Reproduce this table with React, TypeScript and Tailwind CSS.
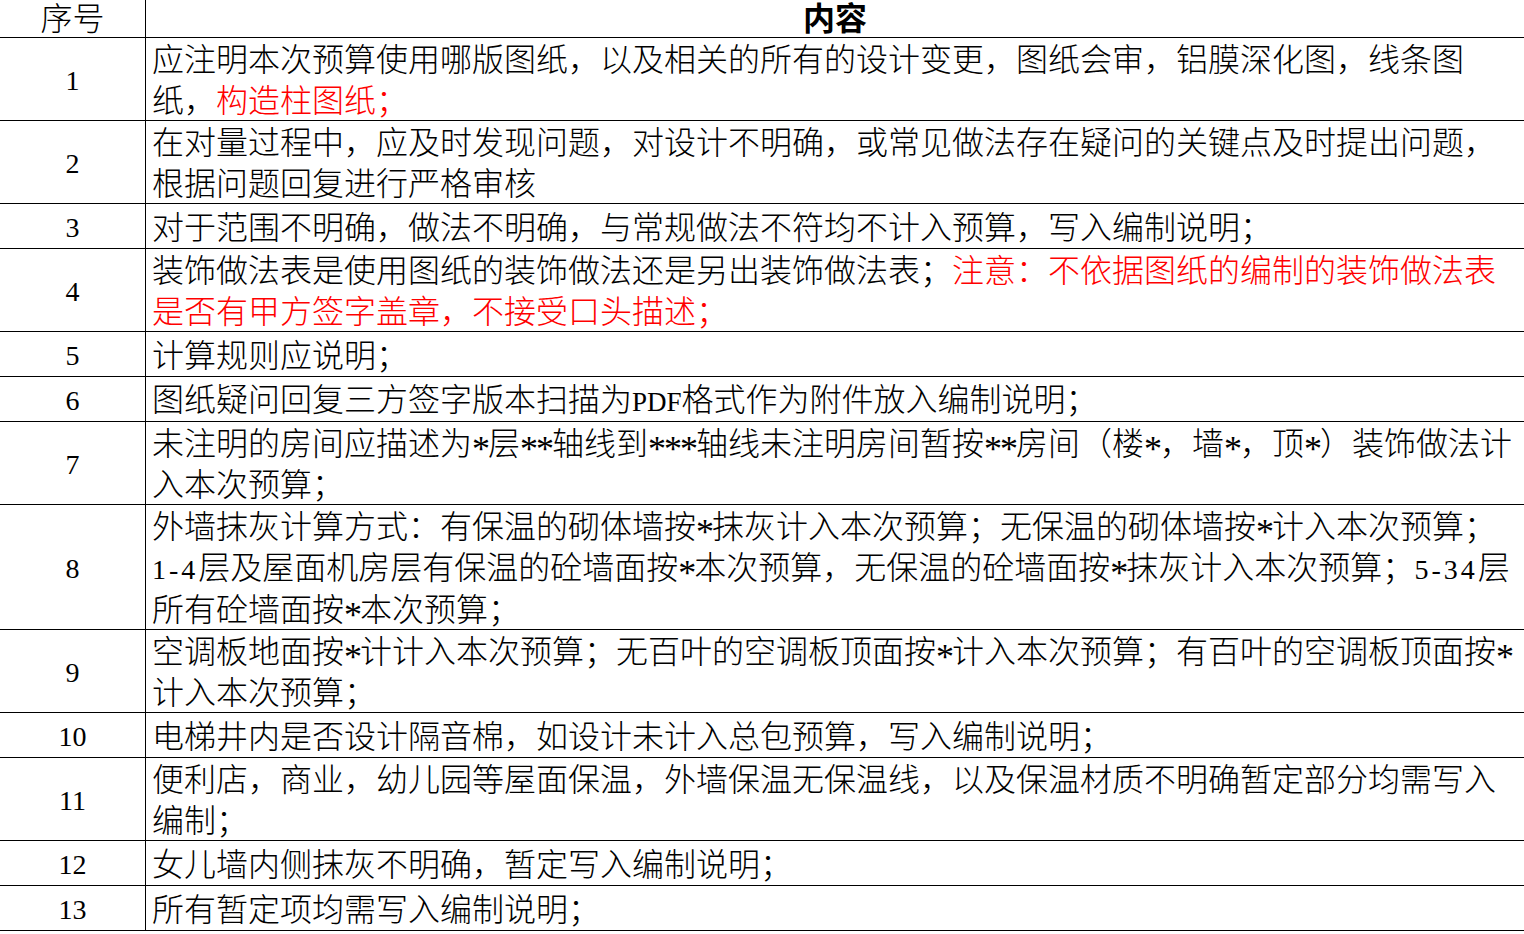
import React from 'react';

type Seg = { t: string; red?: boolean };
type Row = { no: string; h: string; lines: Seg[][] };

const rows: Row[] = [
  {
    no: '1',
    h: 'h-[83px]',
    lines: [
      [{ t: '应注明本次预算使用哪版图纸，以及相关的所有的设计变更，图纸会审，铝膜深化图，线条图' }],
      [{ t: '纸，' }, { t: '构造柱图纸；', red: true }],
    ],
  },
  {
    no: '2',
    h: 'h-[83px]',
    lines: [
      [{ t: '在对量过程中，应及时发现问题，对设计不明确，或常见做法存在疑问的关键点及时提出问题，' }],
      [{ t: '根据问题回复进行严格审核' }],
    ],
  },
  {
    no: '3',
    h: 'h-[45px]',
    lines: [[{ t: '对于范围不明确，做法不明确，与常规做法不符均不计入预算，写入编制说明；' }]],
  },
  {
    no: '4',
    h: 'h-[83px]',
    lines: [
      [
        { t: '装饰做法表是使用图纸的装饰做法还是另出装饰做法表；' },
        { t: '注意：不依据图纸的编制的装饰做法表', red: true },
      ],
      [{ t: '是否有甲方签字盖章，不接受口头描述；', red: true }],
    ],
  },
  { no: '5', h: 'h-[45px]', lines: [[{ t: '计算规则应说明；' }]] },
  {
    no: '6',
    h: 'h-[45px]',
    lines: [[{ t: '图纸疑问回复三方签字版本扫描为PDF格式作为附件放入编制说明；' }]],
  },
  {
    no: '7',
    h: 'h-[83px]',
    lines: [
      [{ t: '未注明的房间应描述为*层**轴线到***轴线未注明房间暂按**房间（楼*，墙*，顶*）装饰做法计' }],
      [{ t: '入本次预算；' }],
    ],
  },
  {
    no: '8',
    h: 'h-[125px]',
    lines: [
      [{ t: '外墙抹灰计算方式：有保温的砌体墙按*抹灰计入本次预算；无保温的砌体墙按*计入本次预算；' }],
      [{ t: '1-4层及屋面机房层有保温的砼墙面按*本次预算，无保温的砼墙面按*抹灰计入本次预算；5-34层' }],
      [{ t: '所有砼墙面按*本次预算；' }],
    ],
  },
  {
    no: '9',
    h: 'h-[83px]',
    lines: [
      [{ t: '空调板地面按*计计入本次预算；无百叶的空调板顶面按*计入本次预算；有百叶的空调板顶面按*' }],
      [{ t: '计入本次预算；' }],
    ],
  },
  {
    no: '10',
    h: 'h-[45px]',
    lines: [[{ t: '电梯井内是否设计隔音棉，如设计未计入总包预算，写入编制说明；' }]],
  },
  {
    no: '11',
    h: 'h-[83px]',
    lines: [
      [{ t: '便利店，商业，幼儿园等屋面保温，外墙保温无保温线，以及保温材质不明确暂定部分均需写入' }],
      [{ t: '编制；' }],
    ],
  },
  { no: '12', h: 'h-[45px]', lines: [[{ t: '女儿墙内侧抹灰不明确，暂定写入编制说明；' }]] },
  { no: '13', h: 'h-[45px]', lines: [[{ t: '所有暂定项均需写入编制说明；' }]] },
];

const font = "font-['Liberation_Serif','Noto_Sans_CJK_SC',serif]";

// latin runs mimic SimSun half-width: digits spaced out, asterisks centred in a half cell
function Mixed({ text }: { text: string }) {
  const parts = text.split(/([0-9-]+|\*+|[A-Za-z]+)/);
  return (
    <>
      {parts.map((p, i) => {
        if (i % 2 === 0) return p;
        if (p[0] === '*') {
          return p.split('').map((c, k) => (
            <span
              key={`${i}-${k}`}
              className="relative top-[6px] inline-block w-[16px] text-center text-[36px] leading-[30px]"
            >
              {c}
            </span>
          ));
        }
        if (/[0-9-]/.test(p[0])) {
          return (
            <span key={i} className="text-[28px] tracking-[3px]">
              {p}
            </span>
          );
        }
        return (
          <span key={i} className="text-[27px]">
            {p}
          </span>
        );
      })}
    </>
  );
}

export default function App() {
  return (
    <div className={`h-[934px] w-[1524px] overflow-hidden bg-white text-black ${font}`}>
      <div className="flex h-[38px] border-b border-black">
        <div className="flex w-[146px] shrink-0 items-center justify-center border-r border-black text-[32px] font-light">
          序号
        </div>
        <div className="flex flex-1 items-center justify-center text-[32px] font-bold">
          内容
        </div>
      </div>
      {rows.map(row => (
        <div key={row.no} className={`flex ${row.h} border-b border-black`}>
          <div className="flex w-[146px] shrink-0 items-center justify-center border-r border-black pt-[3px] text-[28px]">
            {row.no}
          </div>
          <div className="flex flex-1 flex-col justify-center pl-[6px] pt-[4px] text-[32px] font-light leading-[41px]">
            {row.lines.map((line, i) => (
              <div key={i} className="whitespace-nowrap">
                {line.map((s, j) => (
                  <span key={j} className={s.red ? 'text-[#ff0000]' : undefined}>
                    <Mixed text={s.t} />
                  </span>
                ))}
              </div>
            ))}
          </div>
        </div>
      ))}
    </div>
  );
}
